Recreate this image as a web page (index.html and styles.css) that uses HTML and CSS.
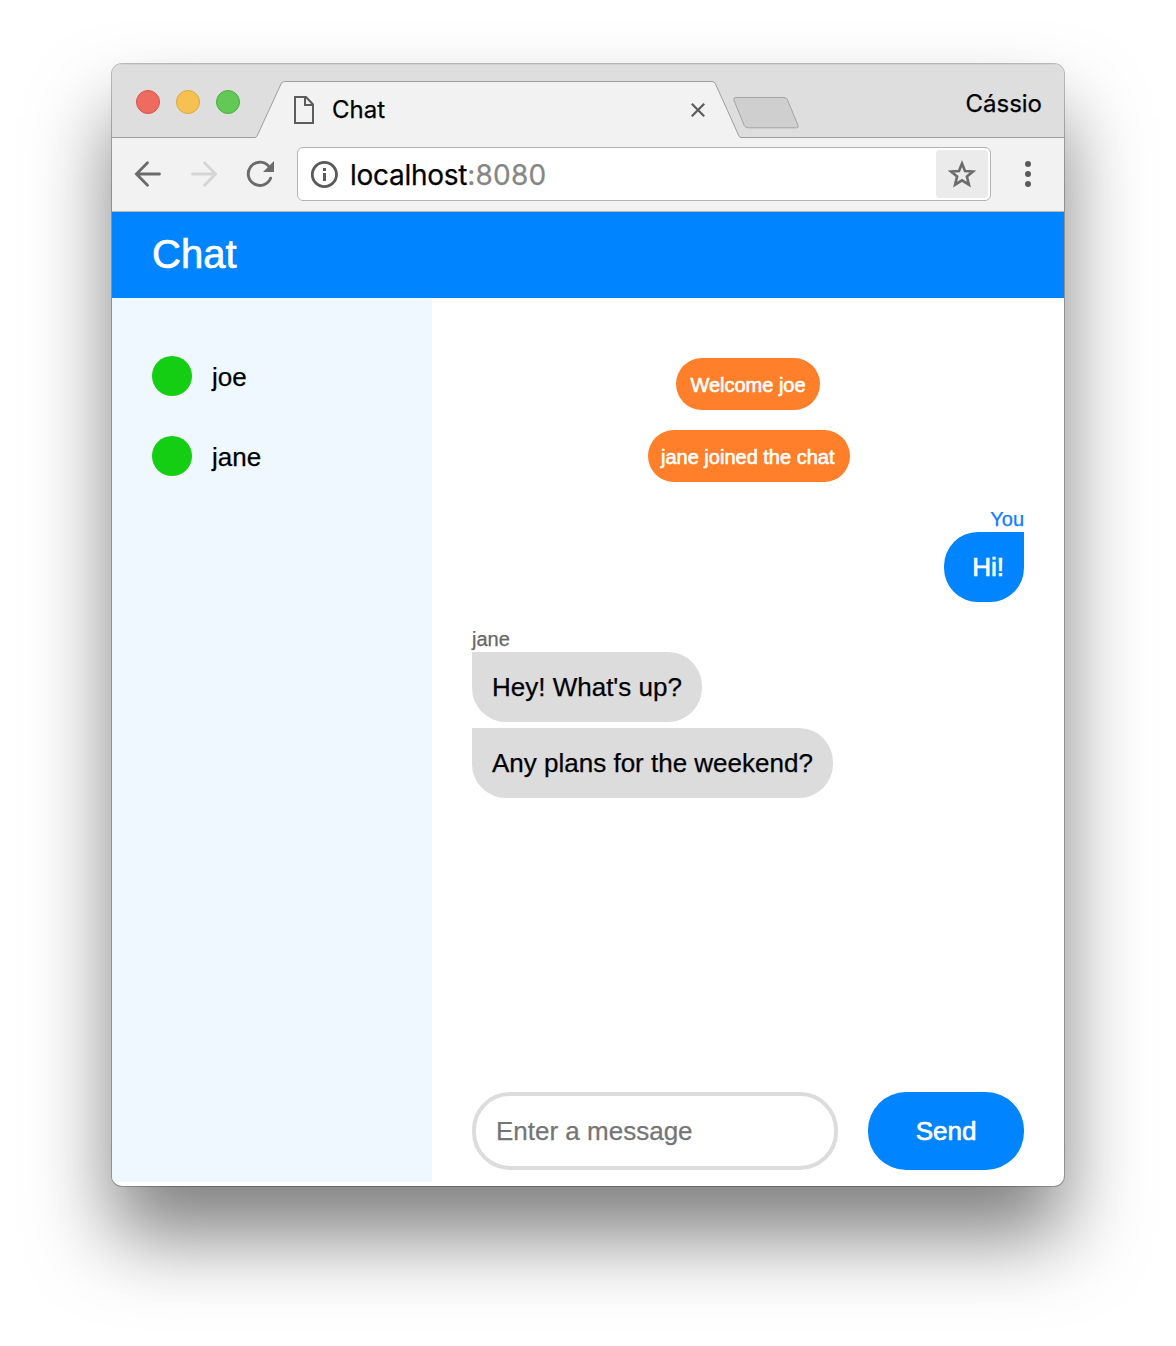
FILE: index.html
```html
<!DOCTYPE html>
<html lang="en">
<head>
<meta charset="utf-8">
<title>Chat</title>
<link rel="stylesheet" href="styles.css">
</head>
<body>
<div class="window">
  <div class="tabstrip">
    <div class="lights">
      <span class="light light-close"></span>
      <span class="light light-min"></span>
      <span class="light light-max"></span>
    </div>
    <div class="tab">
      <svg class="tab-shape" width="486" height="57" viewBox="0 0 486 57">
        <path d="M0 56.5 Q1.5 56.5 2.5 54 L26 3 Q27 .5 29.5 .5 H457 Q459.500 .5 460.500 3 L483.500 54 Q484.500 56.500 486 56.500 V57 H0Z" fill="#f2f2f2"/>
        <path d="M0 56.500 Q1.500 56.500 2.500 54 L26 3 Q27 .5 29.500 .5 H457 Q459.500 .5 460.500 3 L483.500 54 Q484.500 56.500 486 56.500" fill="none" stroke="#9d9d9d"/>
      </svg>
      <svg class="tab-icon" width="20" height="28" viewBox="0 0 20 28" fill="none" stroke="#5c5c5c" stroke-width="2">
        <path d="M1 1H12L19 8.500V27H1Z"/><path d="M11 1V9H19"/>
      </svg>
      <span class="tab-title">Chat</span>
      <svg class="tab-close" width="14" height="14" viewBox="0 0 14 14" stroke="#5c5c5c" stroke-width="2.200">
        <path d="M.8 .8L13.200 13.200M13.200 .8L.8 13.200"/>
      </svg>
    </div>
    <svg class="new-tab" width="66" height="33" viewBox="0 0 66 33">
      <path d="M3 .5H51Q53.500 .5 54.500 3L65 28.200Q66 30.800 63.500 30.800H15Q12.500 30.800 11.300 28.600L1 3.500Q0 .5 3 .5Z" fill="#cfcfcf" stroke="#a3a3a3"/>
    </svg>
    <span class="profile">Cássio</span>
  </div>
  <div class="toolbar">
    <svg class="nav-icon" width="28" height="28" viewBox="0 0 28 28" fill="none" stroke="#6b6b6b" stroke-width="2.800" stroke-linecap="round">
      <path d="M25.500 14H3M13.500 2.800L2.400 14L13.500 25.200"/>
    </svg>
    <svg class="nav-icon" width="28" height="28" viewBox="0 0 28 28" fill="none" stroke="#d5d5d5" stroke-width="2.800" stroke-linecap="round">
      <path d="M2.500 14H25M14.500 2.800L25.600 14L14.500 25.200"/>
    </svg>
    <svg class="nav-icon" width="28" height="28" viewBox="0 0 28 28">
      <path d="M24.600 18.200A11.600 11.600 0 1 1 22.300 5.800" fill="none" stroke="#6b6b6b" stroke-width="2.900" stroke-linecap="round"/>
      <path d="M28 1V12H17Z" fill="#6b6b6b"/>
    </svg>
    <div class="omnibox">
      <svg class="info" width="28" height="28" viewBox="0 0 28 28">
        <circle cx="14.400" cy="14.500" r="12.100" fill="none" stroke="#5a5a5a" stroke-width="2.800"/>
        <path d="M13 8H16V11H13ZM13 13H16V21H13Z" fill="#5a5a5a"/>
      </svg>
      <span class="url"><span class="host">localhost</span><span class="port">:8080</span></span>
      <span class="star">
        <svg width="30" height="29" viewBox="0 0 30 29" fill="none" stroke="#6b6b6b" stroke-width="2.600">
          <path d="M15 3.500L18 11L26 11.500L19.900 16.600L21.900 24.700L15 20.400L8.100 24.700L10.100 16.600L4 11.500L12 11Z"/>
        </svg>
      </span>
    </div>
    <svg class="menu" width="6" height="26" viewBox="0 0 6 26" fill="#5a5a5a">
      <circle cx="3" cy="3" r="3"/><circle cx="3" cy="13" r="3"/><circle cx="3" cy="23" r="3"/>
    </svg>
  </div>
  <header class="app-header">Chat</header>
  <div class="app">
    <aside class="users">
      <div class="user"><span class="status"></span><span class="user-name">joe</span></div>
      <div class="user"><span class="status"></span><span class="user-name">jane</span></div>
    </aside>
    <main class="chat">
      <div class="messages">
        <div class="notice">Welcome joe</div>
        <div class="notice notice-joined">jane joined the chat</div>
        <div class="group own">
          <div class="author">You</div>
          <div class="bubble">Hi!</div>
        </div>
        <div class="group">
          <div class="author">jane</div>
          <div class="bubble">Hey! What's up?</div>
          <div class="bubble">Any plans for the weekend?</div>
        </div>
      </div>
      <form class="composer">
        <input class="field" type="text" placeholder="Enter a message">
        <button class="send" type="button">Send</button>
      </form>
    </main>
  </div>
</div>
</body>
</html>
```
FILE: styles.css
```css
* { box-sizing: border-box; }
body {
  margin: 0;
  padding: 64px 112px 0;
  height: 1346px;
  overflow: hidden;
  background: #fff;
  font-family: "Liberation Sans", Arial, sans-serif;
  font-size: 26px;
  color: #000;
  -webkit-text-stroke: .25px;
}
svg { display: block; flex: none; }
.window {
  display: flex;
  flex-direction: column;
  width: 952px;
  height: 1122px;
  border-radius: 10px;
  overflow: hidden;
  background: #fff;
  box-shadow: 0 0 0 1px rgba(0, 0, 0, .25), 0 50px 80px rgba(0, 0, 0, .5);
}
.tabstrip {
  display: flex;
  flex: none;
  align-items: flex-start;
  height: 74px;
  background: #dedede;
  box-shadow: inset 0 -1px #9d9d9d, inset 0 1px #d2d2d2;
  font-family: Inter, sans-serif;
  font-size: 24px;
}
.lights { display: flex; gap: 16px; padding: 26px 15px 0 24px; }
.light { width: 24px; height: 24px; border-radius: 50%; border: 1px solid; }
.light-close { background: #ee6b60; border-color: #dc5248; }
.light-min { background: #f6c150; border-color: #dca83f; }
.light-max { background: #62c856; border-color: #4fae43; }
.tab {
  position: relative;
  display: flex;
  align-items: center;
  width: 486px;
  height: 57px;
  margin-top: 17px;
  padding: 0 36px 0 39px;
}
.tab-shape { position: absolute; left: 0; top: 0; }
.tab-icon, .tab-title, .tab-close { position: relative; }
.tab-title { flex: 1; margin-left: 18px; }
.new-tab { margin: 33px 0 0 -8px; }
.profile { margin: 25px 22px 0 auto; line-height: 30px; }
.toolbar {
  display: flex;
  flex: none;
  align-items: center;
  height: 74px;
  padding: 0 33px 2px 22px;
  background: #f2f2f2;
  border-bottom: 1px solid #b8b8b8;
}
.nav-icon { margin-right: 28px; }
.omnibox {
  display: flex;
  align-items: center;
  width: 694px;
  height: 54px;
  margin: 1px 34px 0 -5px;
  padding: 0 2px 0 12px;
  border: 1px solid #b4b4b4;
  border-radius: 6px;
  background: #fff;
}
.url { flex: 1; margin-left: 12px; padding-top: 2px; font-family: Inter, sans-serif; font-size: 28px; }
.host { letter-spacing: -.27px; }
.port { color: #868686; letter-spacing: .25px; }
.star {
  display: flex;
  align-items: center;
  justify-content: center;
  width: 52px;
  height: 48px;
  border-radius: 4px;
  background: #ebebeb;
}
.app-header {
  flex: none;
  height: 86px;
  padding-left: 40px;
  background: #0084ff;
  color: #fff;
  font-size: 40px;
  line-height: 85px;
  -webkit-text-stroke: .7px #fff;
}
.app { display: flex; height: 884px; }
.users { width: 320px; padding: 58px 40px; background: #eff7ff; }
.user { display: flex; align-items: center; gap: 20px; height: 40px; margin-bottom: 40px; }
.user-name { padding-top: 2px; }
.status { width: 40px; height: 40px; border-radius: 50%; background: #13ce13; }
.chat { display: flex; flex: 1; flex-direction: column; padding: 60px 40px 12px; }
.messages { display: flex; flex: 1; flex-direction: column; align-items: flex-start; }
.notice {
  align-self: center;
  height: 52px;
  margin-bottom: 20px;
  padding: 0 14px;
  border-radius: 26px;
  background: #ff7f2a;
  color: #fff;
  font-size: 20px;
  line-height: 55px;
  -webkit-text-stroke: .6px #fff;
}
.notice-joined { width: 202px; margin-left: 2px; padding: 0 0 0 13px; }
.group { display: flex; flex-direction: column; align-items: flex-start; margin-top: 6px; margin-bottom: 20px; }
.group + .group { margin-top: 0; margin-bottom: 0; }
.author { height: 24px; color: #666; font-size: 20px; line-height: 22px; }
.bubble {
  min-width: 80px;
  height: 70px;
  margin-bottom: 6px;
  padding: 0 20.5px 0 20px;
  border-radius: 0 34px 34px 34px;
  background: #dcdcdc;
  line-height: 71px;
}
.own { align-self: flex-end; align-items: flex-end; }
.own .author { color: #0f7bff; }
.own .bubble {
  padding-right: 20px;
  border-radius: 34px 0 34px 34px;
  background: #0084ff;
  color: #fff;
  text-align: right;
  -webkit-text-stroke: .7px #fff;
}
.composer { display: flex; gap: 30px; margin: 0; }
.field {
  width: 366px;
  height: 78px;
  padding: 0 20px;
  border: 4px solid #dcdcdc;
  border-radius: 38px;
  background: #fff;
  font: 26px "Liberation Sans", Arial, sans-serif;
}
.field::placeholder { color: #757575; }
.send {
  width: 156px;
  height: 78px;
  border: 0;
  border-radius: 38px;
  background: #0084ff;
  color: #fff;
  font: 26px "Liberation Sans", Arial, sans-serif;
  -webkit-text-stroke: .7px #fff;
}
```
